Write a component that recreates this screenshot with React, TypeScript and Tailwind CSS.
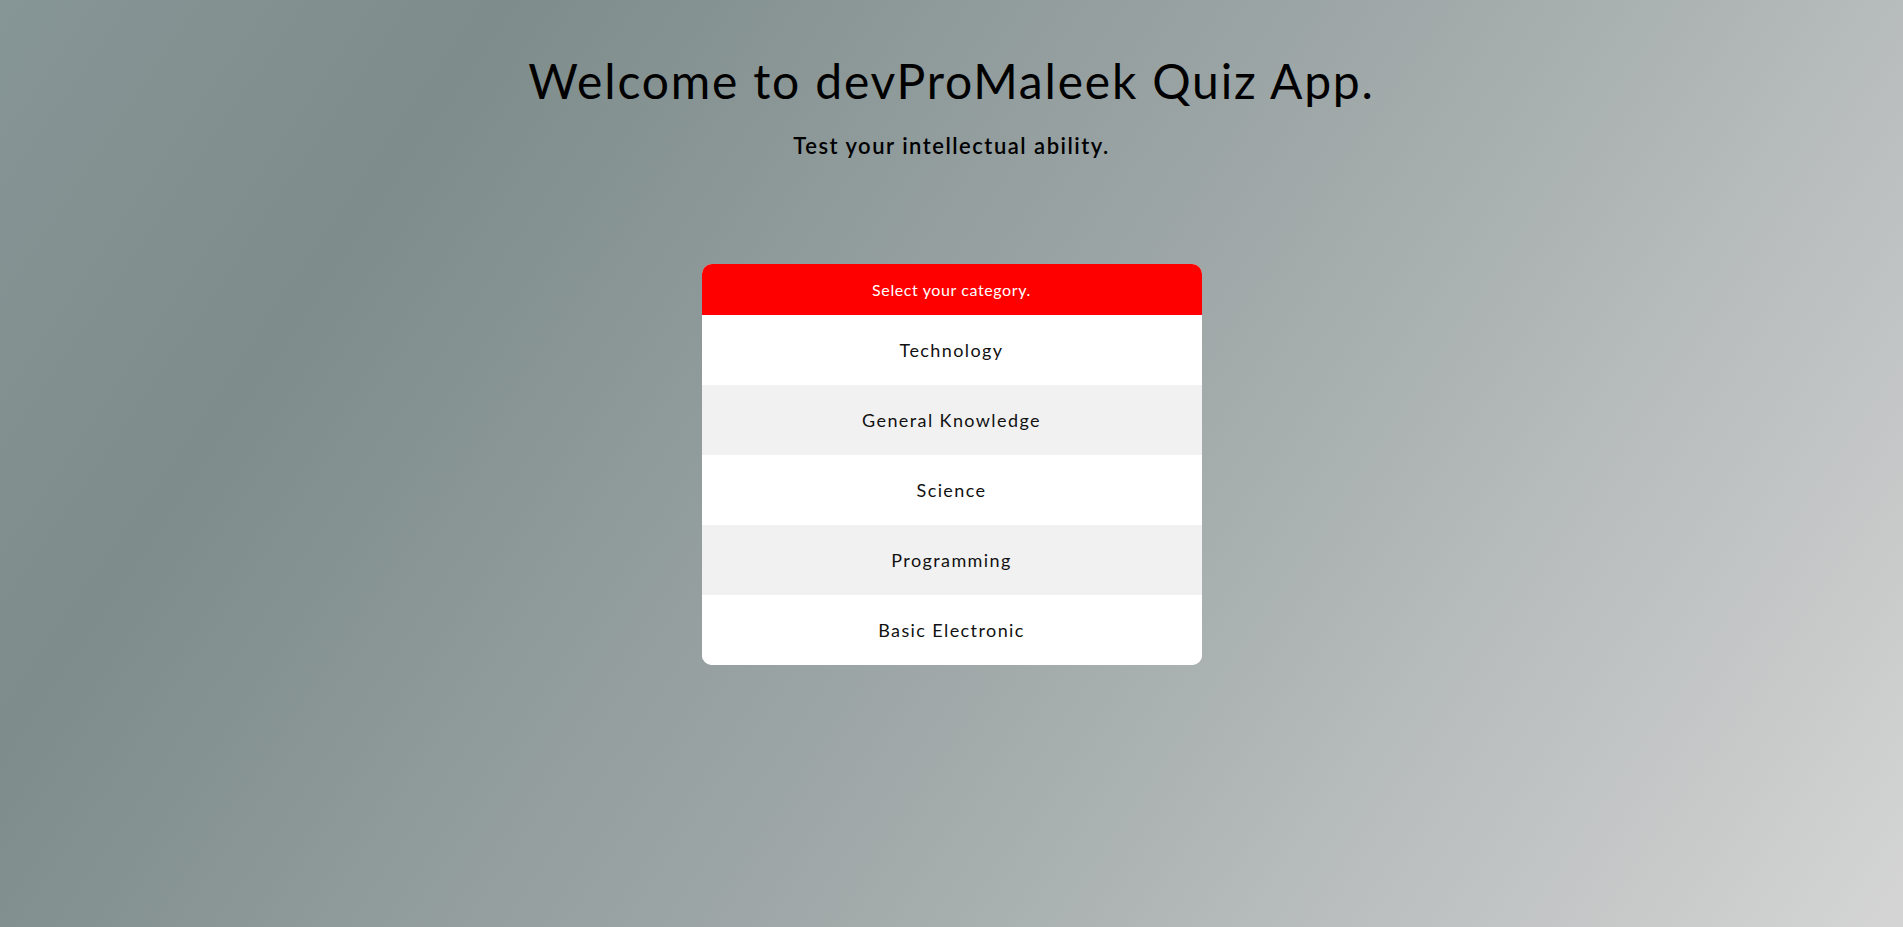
const categories = [
  "Technology",
  "General Knowledge",
  "Science",
  "Programming",
  "Basic Electronic",
];

function CategoryCard() {
  return (
    <div className="w-[500px] rounded-[10px] overflow-hidden bg-white">
      <div className="h-[51px] bg-[#ff0000] flex items-center justify-center text-[16px] font-normal tracking-[0.6px] text-white">
        Select your category.
      </div>
      {categories.map((name, i) => (
        <button
          key={name}
          className={`w-full h-[70px] flex items-center justify-center text-[18px] tracking-[1.4px] text-[#111] cursor-pointer ${
            i % 2 === 1 ? "bg-[#f1f1f1]" : "bg-white"
          }`}
        >
          {name}
        </button>
      ))}
    </div>
  );
}

export default function App() {
  return (
    <div
      className="min-h-[927px] w-full flex flex-col items-center pt-[52px] bg-[linear-gradient(124deg,#869595_0%,#7e8c8c_20%,#a2aaaa_58%,#d5d5d5_100%)]"
      style={{ fontFamily: "Lato, 'Noto Sans', sans-serif" }}
    >
      <h1 className="text-[48px] leading-[58px] font-normal text-black tracking-[1.8px]">
        Welcome to devProMaleek Quiz App.
      </h1>
      <p className="mt-[22px] text-[22px] leading-[28px] font-semibold text-black tracking-[1.5px]">
        Test your intellectual ability.
      </p>
      <div className="mt-[104px]">
        <CategoryCard />
      </div>
    </div>
  );
}
